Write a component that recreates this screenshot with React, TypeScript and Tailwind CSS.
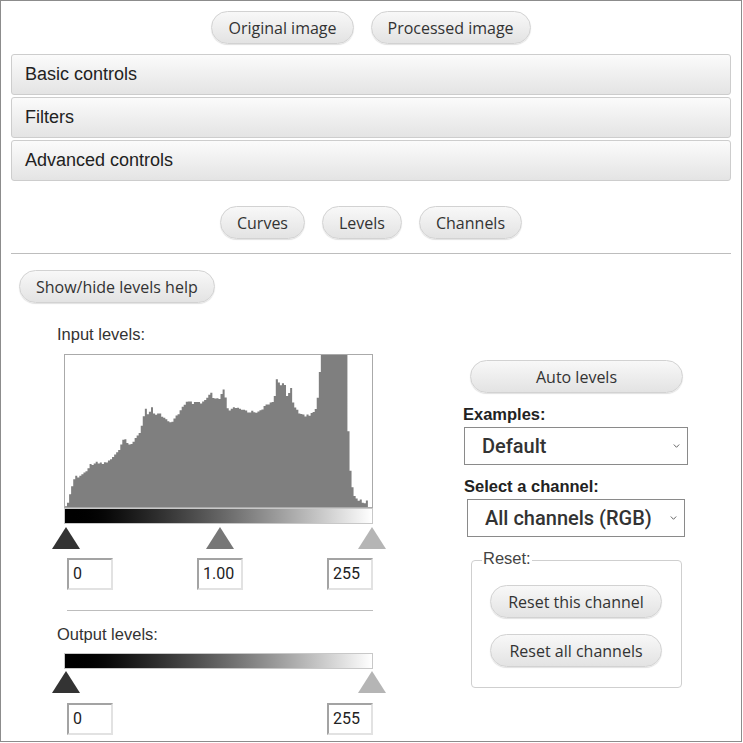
import React from 'react';

// histogram outline, traced in box coords (306 x 151)
const PTS: [number, number][] = [
  [0.7, 151], [3.3, 145], [5.7, 138], [7.7, 127], [11, 120], [14.3, 122], [18.3, 118],
  [22.3, 113], [26.7, 108], [32.3, 106], [38.3, 108], [43.3, 105], [50, 100], [55, 93],
  [59, 83], [62.3, 86], [65.7, 90], [70, 84], [75, 75], [78.3, 62], [80.7, 52], [82.3, 59],
  [86.7, 52], [89, 60], [93.3, 57], [98.3, 63], [105, 68], [110, 62], [116.7, 53],
  [121.7, 47], [128.3, 48], [136.7, 48], [141.7, 43], [145.7, 37], [148.3, 45], [155, 43],
  [158.3, 33], [162.3, 55], [168.3, 53], [175, 54], [183.3, 56], [190, 57], [198.3, 52],
  [205, 48], [209, 43], [211, 25], [215, 29], [219, 28], [221.7, 42], [225, 31],
  [228.3, 52], [233.3, 58], [240, 60], [246.7, 58], [250, 52], [252.3, 42], [254, 18],
  [256, 0], [281.7, 0], [282.7, 89], [285, 122], [287.7, 138], [291.7, 143], [298.3, 147],
  [301.7, 142], [302.7, 151],
];

function histPath() {
  const W = 306;
  const H = 151;
  const N = 150;
  const bw = W / N;
  let d = `M0,${H}`;
  for (let i = 0; i < N; i++) {
    const x = (i + 0.5) * bw;
    let y = H;
    for (let k = 0; k < PTS.length - 1; k++) {
      const [x0, y0] = PTS[k];
      const [x1, y1] = PTS[k + 1];
      if (x >= x0 && x <= x1) {
        y = y0 + ((y1 - y0) * (x - x0)) / (x1 - x0 || 1);
        break;
      }
    }
    const n = Math.sin(i * 12.9898) * 43758.5453;
    const jitter = (n - Math.floor(n) - 0.5) * 3;
    if (y > 1 && y < H - 1) y += jitter;
    y = Math.min(H, Math.max(0, y));
    d += ` L${(i * bw).toFixed(1)},${y.toFixed(1)} L${((i + 1) * bw).toFixed(1)},${y.toFixed(1)}`;
  }
  return d + ` L${W},${H} Z`;
}

const HIST = histPath();

const btn =
  "h-[33px] px-4 rounded-full border border-[#d2d2d2] bg-linear-to-b from-[#f8f8f8] to-[#e3e3e3] shadow-[0_1px_1px_rgba(0,0,0,0.12)] text-[16px] leading-none text-[#333] font-['Open_Sans',sans-serif] flex items-center justify-center";

const panel =
  "h-[41px] rounded-[3px] border border-[#cdcdcd] bg-linear-to-b from-[#fbfbfb] to-[#e4e4e4] flex items-center pl-[13px] text-[18px] text-[#222]";

const field =
  "w-[46px] h-[32px] border-2 border-t-[#a3a3a3] border-l-[#a3a3a3] border-r-[#e2e2e2] border-b-[#e2e2e2] bg-white pl-[4px] flex items-center text-[16px] text-[#222] font-['Roboto',sans-serif]";

function Chevron() {
  return (
    <svg width="7" height="5" viewBox="0 0 7 5" className="absolute right-[7px] top-1/2 -translate-y-1/2">
      <path d="M0.8 1 L3.5 3.8 L6.2 1" fill="none" stroke="#666" strokeWidth="1" />
    </svg>
  );
}

function Handle({ left, color }: { left: number; color: string }) {
  return (
    <div
      className="absolute top-0 w-0 h-0 border-l-[14px] border-r-[14px] border-b-[22px] border-l-transparent border-r-transparent"
      style={{ left, borderBottomColor: color }}
    />
  );
}

export default function App() {
  return (
    <div className="w-[742px] h-[742px] border border-[#8c8c8c] bg-white overflow-hidden font-['Liberation_Sans',Arial,sans-serif]">
      <div className="px-[10px]">
        {/* view toggle */}
        <div className="pt-[10px] flex justify-center gap-[17px]">
          <button className={btn}>Original image</button>
          <button className={btn}>Processed image</button>
        </div>

        {/* accordion */}
        <div className="mt-[10px] flex flex-col gap-[2px]">
          <div className={panel}>Basic controls</div>
          <div className={panel}>Filters</div>
          <div className={panel}>Advanced controls</div>
        </div>

        <div className="mt-[25px] flex justify-center gap-[17px]">
          <button className={btn}>Curves</button>
          <button className={btn}>Levels</button>
          <button className={btn}>Channels</button>
        </div>

        <div className="mt-[14px] h-px bg-[#bdbdbd]" />
      </div>

      <div className="px-[18px]">
        <div className="mt-[16px] flex">
          <button className={btn}>Show/hide levels help</button>
        </div>

        <div className="flex">
          {/* levels */}
          <div className="w-[444px] pl-[38px]">
            <p className="mt-[21px] text-[16.5px] leading-[20px] text-[#333]">Input levels:</p>
            <div className="ml-[7px] w-[309px]">
              <div className="mt-[10px] h-[154px] border border-[#aaa] bg-white">
                <svg viewBox="0 0 306 151" preserveAspectRatio="none" className="w-full h-full block">
                  <path d={HIST} fill="#7f7f7f" />
                </svg>
              </div>
              <div className="h-[16px] border border-[#c8c8c8] bg-linear-to-r from-black to-white" />
              <div className="relative mt-[3px] h-[21px]">
                <Handle left={-12} color="#333" />
                <Handle left={142} color="#777" />
                <Handle left={294} color="#b5b5b5" />
              </div>
              <div className="mt-[10px] ml-[3px] w-[306px] flex justify-between">
                <div className={field}>0</div>
                <div className={field}>1.00</div>
                <div className={field}>255</div>
              </div>
              <div className="mt-[20px] ml-[3px] w-[306px] h-px bg-[#bdbdbd]" />
            </div>
            <p className="mt-[13px] text-[16.5px] leading-[20px] text-[#333]">Output levels:</p>
            <div className="ml-[7px] w-[309px]">
              <div className="mt-[9px] h-[16px] border border-[#c8c8c8] bg-linear-to-r from-black to-white" />
              <div className="relative mt-[2px] h-[22px]">
                <Handle left={-12} color="#333" />
                <Handle left={294} color="#b5b5b5" />
              </div>
              <div className="mt-[10px] ml-[3px] w-[306px] flex justify-between">
                <div className={field}>0</div>
                <div className={field}>255</div>
              </div>
            </div>
          </div>

          {/* options */}
          <div className="w-[230px]">
            <button className={`${btn} mt-[57px] ml-[7px] w-[213px]`}>Auto levels</button>
            <p className="mt-[11px] text-[16.5px] leading-[20px] font-bold text-[#222]">Examples:</p>
            <div className="relative mt-[3px] ml-px w-[224px] h-[38px] border border-[#8a8a8a] flex items-center pl-[17px] text-[20px] font-medium text-[#333] font-['Roboto',sans-serif]">
              Default
              <Chevron />
            </div>
            <p className="mt-[11px] ml-px text-[16.5px] leading-[20px] font-bold text-[#222]">Select a channel:</p>
            <div className="relative mt-[3px] ml-[4px] w-[218px] h-[38px] border border-[#8a8a8a] flex items-center pl-[17px] text-[20px] font-medium text-[#333] font-['Roboto',sans-serif]">
              All channels (RGB)
              <Chevron />
            </div>
            <div className="relative mt-[23px] ml-[8px] w-[211px] h-[128px] rounded-[4px] border border-[#cfcfcf] pt-[24px] pl-[18px] flex flex-col gap-[16px]">
              <span className="absolute -top-[12px] left-[10px] bg-white px-px text-[16.5px] leading-[18px] text-[#444]">Reset:</span>
              <button className={`${btn} w-[172px]`}>Reset this channel</button>
              <button className={`${btn} w-[172px]`}>Reset all channels</button>
            </div>
          </div>
        </div>
      </div>
    </div>
  );
}
